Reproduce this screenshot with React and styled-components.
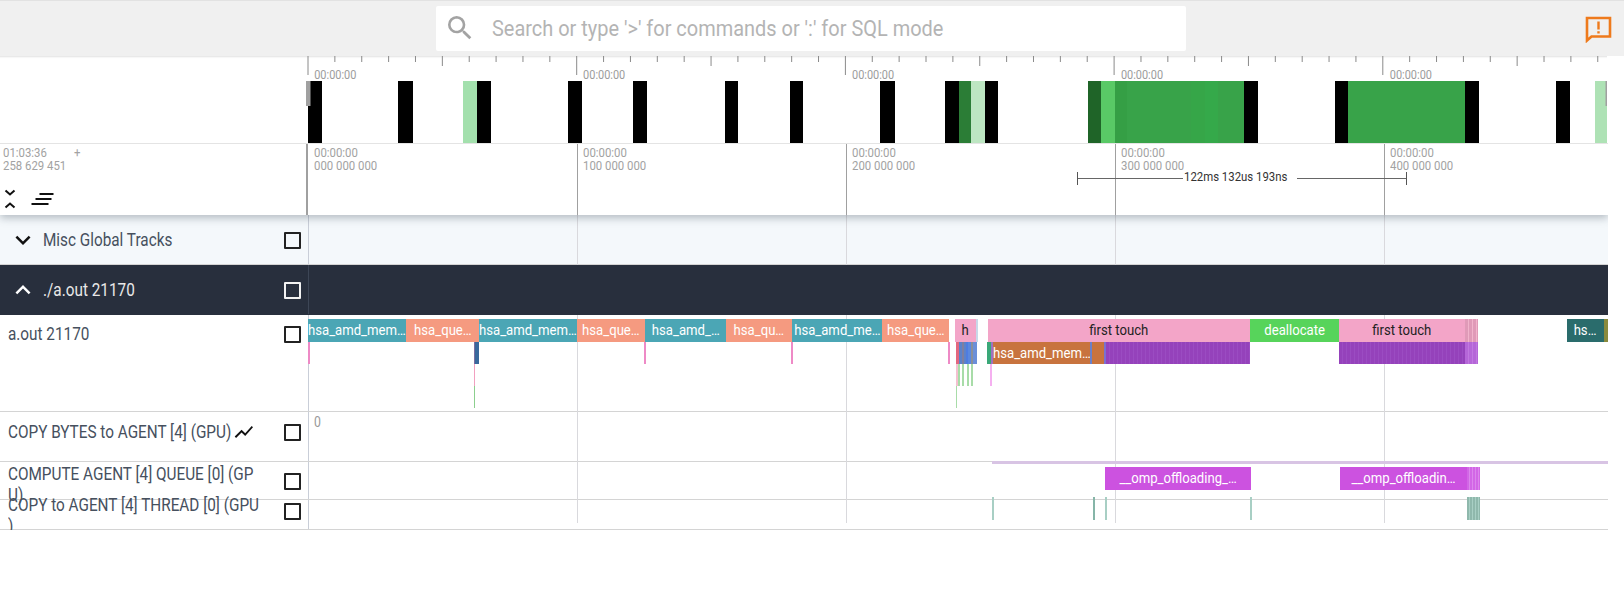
import React from 'react';
import styled, { createGlobalStyle, css } from 'styled-components';
import { MdSearch, MdExpandMore, MdExpandLess, MdShowChart } from 'react-icons/md';

const GlobalStyle = createGlobalStyle`
  * { box-sizing: border-box; }
  body {
    margin: 0;
    background: #fff;
    font-family: Roboto, "Liberation Sans", sans-serif;
  }
`;

const SHELL_WIDTH = 308;
const COLUMNS = 'repeat(4, 268.9px) 1fr';

// The app uses a condensed face, Roboto squeezed sideways comes close
const condensed = css`
  transform: scaleX(0.875);
  transform-origin: left center;
`;

// Top bar
const TopBar = styled.header`
  height: 56px;
  background: #f0f0f0;
  border-top: 1px solid #e2e2e2;
  display: flex;
  align-items: center;
  justify-content: center;
  position: relative;
  padding-right: 2px;
`;

const SearchBox = styled.div`
  width: 750px;
  height: 45px;
  margin-top: -1px;
  background: #fff;
  border-radius: 2px;
  display: flex;
  align-items: center;
  padding-left: 8px;
  color: #a3a3a3;
`;

const SearchText = styled.span`
  ${condensed}
  margin-left: 16px;
  font-size: 22.8px;
  color: #b4b4b4;
  white-space: nowrap;
`;

const FeedbackButton = styled.svg`
  position: absolute;
  right: 12px;
  top: 15px;
  width: 27px;
  height: 27px;
`;

// Overview
const Overview = styled.section`
  width: 1607px;
  height: 87px;
  display: flex;
  background: #fff;
  box-shadow: inset 0 3px 2px -2px rgba(0, 0, 0, 0.12);
`;

const OverviewSpacer = styled.div`
  width: 306px;
  flex: none;
`;

const OverviewChart = styled.svg`
  width: 1301px;
  height: 87px;
  display: block;
  text {
    font-family: Roboto, sans-serif;
    font-size: 12.5px;
    fill: #9c9c9c;
  }
`;

// Time axis
const TimeHeader = styled.section`
  position: relative;
  z-index: 5;
  width: 1608px;
  height: 72px;
  display: flex;
  background: #fff;
  border-top: 1px solid #e4e4e4;
  box-shadow: 0 3px 8px rgba(60, 75, 90, 0.35);
  clip-path: inset(0 0 -14px 0);
`;

const TimeShell = styled.div`
  width: ${SHELL_WIDTH}px;
  flex: none;
  padding: 2px 0 0 3px;
  border-right: 2px solid #a0a0a0;
  display: flex;
  flex-direction: column;
`;

const Clock = styled.div`
  ${condensed}
  font-size: 13px;
  line-height: 13px;
  color: #a2a2a2;
  display: flex;
`;

const ClockPlus = styled.span`
  margin-left: 31px;
`;

const ShellTools = styled.div`
  display: flex;
  align-items: center;
  gap: 15px;
  margin-top: auto;
  margin-bottom: 6px;
  margin-left: 1px;
`;

const TimeAxis = styled.div`
  flex: 1;
  position: relative;
  display: grid;
  grid-template-columns: ${COLUMNS};
`;

const TimeCell = styled.div`
  border-left: ${(p) => (p.$first ? 'none' : '1px solid #a0a0a0')};
  padding: 2px 0 0 ${(p) => (p.$first ? 6 : 5)}px;
`;

const TimeText = styled.div`
  ${condensed}
  font-size: 13px;
  line-height: 13px;
  color: #a2a2a2;
`;

const SpanRuler = styled.div`
  position: absolute;
  left: 769px;
  top: 28px;
  width: 330px;
  height: 13px;
  display: flex;
  align-items: center;
  border-left: 1px solid #555;
  border-right: 1px solid #555;
`;

const SpanRule = styled.div`
  height: 1px;
  background: #666;
  flex: ${(p) => (p.$grow ? '1' : `none`)};
  width: ${(p) => p.$width || 0}px;
`;

const SpanLabel = styled.div`
  width: 113px;
  margin: -4px 0 0 1px;
  flex: none;
  white-space: nowrap;
`;

const SpanText = styled.div`
  ${condensed}
  font-size: 13px;
  line-height: 13px;
  color: #333;
`;

// Tracks
const Tracks = styled.main`
  position: relative;
  width: 1608px;
`;

const GridLines = styled.div`
  position: absolute;
  left: ${SHELL_WIDTH}px;
  right: 0;
  top: 0;
  height: 308px;
  z-index: 1;
  display: grid;
  grid-template-columns: ${COLUMNS};
  pointer-events: none;
`;

const GridLine = styled.div`
  border-left: ${(p) => (p.$first ? 'none' : '1px solid #d9d9dd')};
`;

const TrackRow = styled.div`
  display: flex;
  height: ${(p) => p.$height}px;
  border-bottom: 1px solid ${(p) => (p.$kind === 'dark' ? '#282f3d' : '#d4d4d4')};
  background: ${(p) => (p.$kind === 'dark' ? '#282f3d' : p.$kind === 'light' ? '#f4f8fb' : 'transparent')};
  color: ${(p) => (p.$kind === 'dark' ? '#e8e8e8' : '#46505e')};
  ${(p) => p.$kind === 'dark' && 'position: relative; z-index: 3;'}
`;

const TrackShell = styled.div`
  width: ${SHELL_WIDTH}px;
  height: ${(p) => p.$shell || p.$height}px;
  flex: none;
  display: flex;
  align-items: center;
  padding-right: 7px;
`;

const Chevron = styled.span`
  width: 43px;
  flex: none;
  display: flex;
  justify-content: center;
  padding-left: 2px;
  color: ${(p) => (p.$dark ? '#fff' : '#111')};
`;

const Title = styled.div`
  ${condensed}
  font-size: 17.5px;
  line-height: 21px;
  flex: none;
  margin-right: -37px;
  margin-left: ${(p) => (p.$group ? 0 : 8)}px;
  display: flex;
  align-items: center;
  white-space: nowrap;
  ${(p) => p.$wrap && `
    display: block;
    width: 289px;
    white-space: normal;
    line-break: anywhere;
    margin-top: 8px;
  `}
`;

const ChartIcon = styled.span`
  display: inline-flex;
  margin-left: 2px;
  color: #111;
  transform: scaleX(1.14);
  transform-origin: left center;
`;

const CheckBox = styled.span`
  width: 17px;
  height: 17px;
  margin-left: auto;
  flex: none;
  border: 2px solid ${(p) => (p.$dark ? '#f2f2f2' : '#222')};
  border-radius: 1px;
`;

const TrackCanvas = styled.div`
  flex: 1;
  position: relative;
  z-index: 2;
  border-left: 1px solid ${(p) => (p.$dark ? '#3d4656' : '#c9ced8')};
`;

const Slice = styled.div.attrs((p) => ({
  style: { left: p.$x - SHELL_WIDTH - 1, width: p.$w, top: p.$top, height: p.$h },
}))`
  position: absolute;
  background: ${(p) => p.$color};
  color: ${(p) => p.$ink || '#fff'};
  display: flex;
  justify-content: center;
  white-space: nowrap;
  overflow: hidden;
`;

const SliceText = styled.span`
  flex: none;
  font-size: 15px;
  line-height: ${(p) => p.$h}px;
  transform: scaleX(0.875);
`;

const ZeroLabel = styled.span`
  ${condensed}
  position: absolute;
  left: 5px;
  top: 2px;
  font-size: 14px;
  line-height: 16px;
  color: #999;
`;

const CHECK_PURPLE = 'repeating-linear-gradient(90deg, #9542bb 0 3px, #9b4cc2 3px 4px)';
const PINK_STRIPES = 'repeating-linear-gradient(90deg, #e09ab8 0 3px, #f2b4cc 3px 4px)';
const LILAC_STRIPES = 'repeating-linear-gradient(90deg, #b566d8 0 3px, #c078e0 3px 4px)';
const OMP_STRIPES = 'repeating-linear-gradient(90deg, #d266e6 0 2px, #dc86ec 2px 3px)';
const THREAD_STRIPES = 'repeating-linear-gradient(90deg, #8fb8ac 0 2px, #a8cfc4 2px 3px)';

const MAIN = [
  [308, 98, '#4ba6b5', 'hsa_amd_mem…'],
  [406, 73, '#f59a80', 'hsa_que…'],
  [479, 98, '#4ba6b5', 'hsa_amd_mem…'],
  [577, 68, '#f59a80', 'hsa_que…'],
  [645, 81, '#4ba6b5', 'hsa_amd_…'],
  [726, 66, '#f59a80', 'hsa_qu…'],
  [792, 90, '#4ba6b5', 'hsa_amd_me…'],
  [882, 67, '#f59a80', 'hsa_que…'],
  [955, 21, '#f3a5c8', 'h', '#222'],
  [976, 1.5, '#c8d8e8'],
  [988, 262, '#f3a5c8', 'first touch', '#222'],
  [1250, 89, '#57d45b', 'deallocate'],
  [1339, 126, '#f3a5c8', 'first touch', '#222'],
  [1465, 13, PINK_STRIPES],
  [1567, 37, '#2a6c6c', 'hs…'],
  [1604, 4, '#8a8a3c'],
];

const SECOND = [
  [307.5, 2, '#ee8ac6'],
  [473.5, 1.5, '#7a6ea0'],
  [475, 3.5, '#39689c'],
  [644, 1.5, '#ee8ac6'],
  [790.5, 2, '#ee8ac6'],
  [948, 2, '#ee8ac6'],
  [956, 3, '#e2677f'],
  [959, 3, '#5d82c9'],
  [962, 2, '#7f7fa0'],
  [964, 2, '#5d82c9'],
  [966, 2, '#4f7ce0'],
  [968, 3, '#5a88e0'],
  [971, 2, '#8a8f9a'],
  [973, 4, '#6b8fd8'],
  [987, 4, '#3aa878'],
  [991, 2, '#a070c0'],
  [993, 97, '#c8733e', 'hsa_amd_mem…'],
  [1090, 2, '#6a80c8'],
  [1092, 12, '#c8733e'],
  [1104, 2, '#7a70d0'],
  [1106, 144, CHECK_PURPLE],
  [1339, 126, CHECK_PURPLE],
  [1465, 13, LILAC_STRIPES],
];

const THIRD = [
  [473.5, 1.5, '#f2a0c0'],
  [956, 2, '#f4c0d0'],
  [958, 1.5, '#a8dca8'],
  [962, 1.5, '#a8dca8'],
  [967, 1.5, '#a8dca8'],
  [971, 1.5, '#a8dca8'],
  [990, 1.5, '#f5b0f0'],
];

const FOURTH = [
  [473.5, 1.5, '#8ccf8e'],
  [955.5, 1.5, '#a8dca8'],
];

const THREAD_MARKS = [
  [992, 1.5, '#a8cfc4'],
  [1093, 1.5, '#86b5a8'],
  [1105, 1.5, '#a8cfc4'],
  [1250, 1.5, '#a8cfc4'],
  [1467, 13, THREAD_STRIPES],
];

const BARS = [
  [307, 14, '#000'], [397, 15, '#000'], [462.5, 13.5, '#a3e0ad'], [476, 14, '#000'],
  [567, 14, '#000'], [632, 14, '#000'], [724, 13, '#000'], [789, 13, '#000'],
  [879, 15, '#000'], [944, 14, '#000'], [958, 12, '#2b7d36'], [970, 14, '#bde6c2'],
  [984, 13, '#000'], [1087, 13, '#1f6428'], [1100, 14, '#59c966'], [1114, 12, '#359f45'],
  [1126, 64, '#38a349'], [1190, 14, '#36a648'], [1204, 13, '#35a94a'], [1217, 26, '#38a349'],
  [1243, 14, '#000'], [1334, 13, '#000'], [1347, 117, '#38a349'], [1464, 14, '#000'],
  [1555, 14, '#000'], [1594, 13, '#aee2b5'],
];

const TICKS = Array.from({ length: 49 }, (_, i) => i);
const MAJORS = [
  ['00:00:00', '000 000 000'],
  ['00:00:00', '100 000 000'],
  ['00:00:00', '200 000 000'],
  ['00:00:00', '300 000 000'],
  ['00:00:00', '400 000 000'],
];

const tickLength = (i) => (i % 10 === 0 ? 19 : i % 5 === 0 ? 10 : 6);

const renderSlices = (list, top, h) =>
  list.map(([x, w, color, text, ink]) => (
    <Slice key={`${top}-${x}`} $x={x} $w={w} $top={top} $h={h} $color={color} $ink={ink}>
      {text && <SliceText $h={h}>{text}</SliceText>}
    </Slice>
  ));

//Overview strip drawn as a chart, coordinates follow the page
const OverviewGraph = () => (
  <OverviewChart viewBox="305.5 56 1301 87">
    {TICKS.map((i) => {
      const x = 307.5 + i * 26.87;
      return <line key={i} x1={x} x2={x} y1="56" y2={56 + tickLength(i)} stroke="#8a8a8a" strokeWidth="1" />;
    })}
    {MAJORS.map((m, i) => (
      <text key={i} transform={`translate(${313.7 + i * 268.9} 79) scale(0.875 1)`}>{m[0]}</text>
    ))}
    {BARS.map(([x, w, fill]) => (
      <rect key={x} x={x} y="81" width={w} height="62" fill={fill} shapeRendering="crispEdges" />
    ))}
    <rect x="304" y="81" width="6" height="25" fill="#a0a0a0" />
    <rect x="1605" y="81" width="2" height="25" fill="#a0a0a0" />
  </OverviewChart>
);

const CollapseIcon = () => (
  <svg width="12" height="20" viewBox="0 0 12 20" fill="none" stroke="#111" strokeWidth="2">
    <path d="M1.5 1.5 6 5.5l4.5-4M1.5 18.5 6 14.5l4.5 4" />
  </svg>
);

const SortIcon = () => (
  <svg width="23" height="12" viewBox="0 0 23 12" fill="none" stroke="#111" strokeWidth="2">
    <path d="M8.5 1h14M4.5 6h16M.5 11h17" />
  </svg>
);

const App = () => {
  return (
    <>
      <GlobalStyle />
      <TopBar>
        <SearchBox>
          <MdSearch size={32} />
          <SearchText>Search or type '&gt;' for commands or ':' for SQL mode</SearchText>
        </SearchBox>
        <FeedbackButton viewBox="0 0 27 27" fill="none">
          <path d="M2 2h23v18.5H6.5L2 24.5z" stroke="#ee7a1c" strokeWidth="2.6" />
          <path d="M13.5 5.5v8M13.5 15.2v2.4" stroke="#ee7a1c" strokeWidth="2.4" />
        </FeedbackButton>
      </TopBar>

      <Overview>
        <OverviewSpacer />
        <OverviewGraph />
      </Overview>

      <TimeHeader>
        <TimeShell>
          <Clock>01:03:36<ClockPlus>+</ClockPlus></Clock>
          <Clock>258 629 451</Clock>
          <ShellTools>
            <CollapseIcon />
            <SortIcon />
          </ShellTools>
        </TimeShell>
        <TimeAxis>
          {MAJORS.map((m, i) => (
            <TimeCell key={m[1]} $first={i === 0}>
              <TimeText>{m[0]}</TimeText>
              <TimeText>{m[1]}</TimeText>
            </TimeCell>
          ))}
          <SpanRuler>
            <SpanRule $width={105} />
            <SpanLabel><SpanText>122ms 132us 193ns</SpanText></SpanLabel>
            <SpanRule $grow />
          </SpanRuler>
        </TimeAxis>
      </TimeHeader>

      <Tracks>
        <GridLines>
          {MAJORS.map((m, i) => <GridLine key={m[1]} $first={i === 0} />)}
        </GridLines>

        <TrackRow $height={50} $kind="light">
          <TrackShell $height={50}>
            <Chevron><MdExpandMore size={30} /></Chevron>
            <Title $group>Misc Global Tracks</Title>
            <CheckBox />
          </TrackShell>
          <TrackCanvas />
        </TrackRow>

        <TrackRow $height={50} $kind="dark">
          <TrackShell $height={50}>
            <Chevron $dark><MdExpandLess size={30} /></Chevron>
            <Title $group>./a.out 21170</Title>
            <CheckBox $dark />
          </TrackShell>
          <TrackCanvas $dark />
        </TrackRow>

        <TrackRow $height={97}>
          <TrackShell $shell={38}>
            <Title>a.out 21170</Title>
            <CheckBox />
          </TrackShell>
          <TrackCanvas>
            {renderSlices(MAIN, 4, 23)}
            {renderSlices(SECOND, 27, 22)}
            {renderSlices(THIRD, 49, 22)}
            {renderSlices(FOURTH, 71, 22)}
          </TrackCanvas>
        </TrackRow>

        <TrackRow $height={50}>
          <TrackShell $shell={40}>
            <Title>
              COPY BYTES to AGENT [4] (GPU)
              <ChartIcon><MdShowChart size={22} /></ChartIcon>
            </Title>
            <CheckBox />
          </TrackShell>
          <TrackCanvas>
            <ZeroLabel>0</ZeroLabel>
          </TrackCanvas>
        </TrackRow>

        <TrackRow $height={38}>
          <TrackShell $height={38}>
            <Title $wrap>COMPUTE AGENT [4] QUEUE [0] (GPU)</Title>
            <CheckBox />
          </TrackShell>
          <TrackCanvas>
            <Slice $x={992} $w={616} $top={-1} $h={3} $color="#d8c4e4" />
            <Slice $x={1105} $w={145.5} $top={5} $h={23} $color="#cc52e0">
              <SliceText $h={23}>__omp_offloading_…</SliceText>
            </Slice>
            <Slice $x={1339.5} $w={127.5} $top={5} $h={23} $color="#cc52e0">
              <SliceText $h={23}>__omp_offloadin…</SliceText>
            </Slice>
            <Slice $x={1467} $w={13} $top={5} $h={23} $color={OMP_STRIPES} />
          </TrackCanvas>
        </TrackRow>

        <TrackRow $height={30}>
          <TrackShell $shell={23}>
            <Title $wrap>COPY to AGENT [4] THREAD [0] (GPU)</Title>
            <CheckBox />
          </TrackShell>
          <TrackCanvas>
            {renderSlices(THREAD_MARKS, -3, 23)}
          </TrackCanvas>
        </TrackRow>
      </Tracks>
    </>
  );
};

export default App;
